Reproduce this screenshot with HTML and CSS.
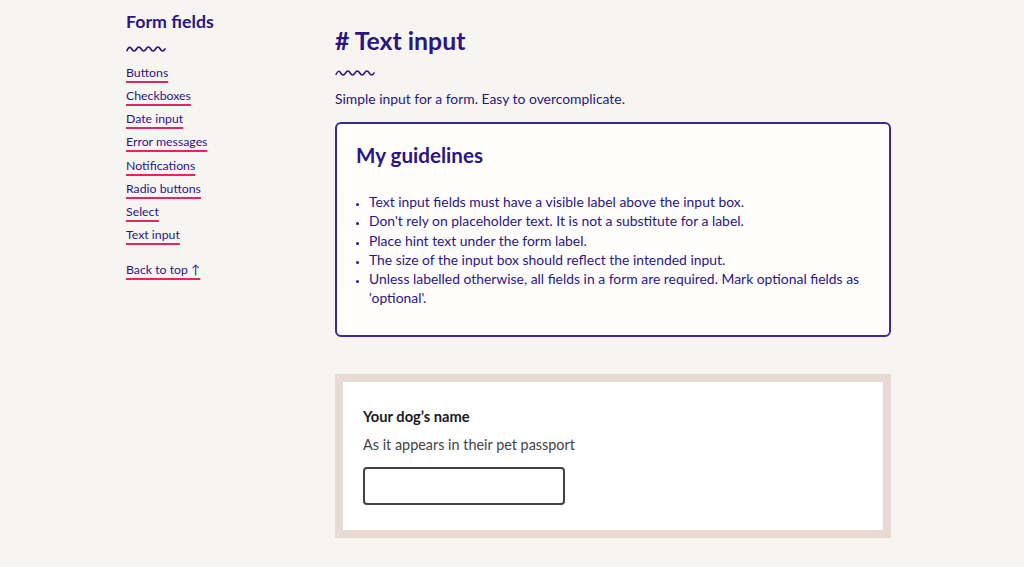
FILE: index.html
```html
<!DOCTYPE html>
<html lang="en">
<head>
<meta charset="utf-8">
<title>Text input</title>
<link rel="stylesheet" href="styles.css">
</head>
<body>
<div class="page">
  <nav class="sidebar">
    <h2 class="side-title">Form fields</h2>
    <svg class="squiggle" width="40" height="8" viewBox="0 0 40 8"><path d="M1 5.5 Q3.4 0 5.75 4 T10.5 4 T15.25 4 T20 4 T24.75 4 T29.5 4 T34.25 4 T39 4" fill="none" stroke="#2b1582" stroke-width="1.7" stroke-linecap="round"/></svg>
    <ul class="side-list">
      <li><a href="#">Buttons</a></li>
      <li><a href="#">Checkboxes</a></li>
      <li><a href="#">Date input</a></li>
      <li><a href="#">Error messages</a></li>
      <li><a href="#">Notifications</a></li>
      <li><a href="#">Radio buttons</a></li>
      <li><a href="#">Select</a></li>
      <li><a href="#">Text input</a></li>
    </ul>
    <a class="back" href="#">Back to top ↑</a>
  </nav>
  <main class="main">
    <h1 class="title"># Text input</h1>
    <svg class="squiggle" width="40" height="8" viewBox="0 0 40 8"><path d="M1 5.5 Q3.4 0 5.75 4 T10.5 4 T15.25 4 T20 4 T24.75 4 T29.5 4 T34.25 4 T39 4" fill="none" stroke="#2b1582" stroke-width="1.5" stroke-linecap="round"/></svg>
    <p class="intro">Simple input for a form. Easy to overcomplicate.</p>
    <section class="guidelines">
      <h2 class="g-title">My guidelines</h2>
      <ul class="g-list">
        <li>Text input fields must have a visible label above the input box.</li>
        <li>Don't rely on placeholder text. It is not a substitute for a label.</li>
        <li>Place hint text under the form label.</li>
        <li>The size of the input box should reflect the intended input.</li>
        <li>Unless labelled otherwise, all fields in a form are required. Mark optional fields as 'optional'.</li>
      </ul>
    </section>
    <section class="demo">
      <div class="demo-inner">
        <label class="label" for="dog">Your dog’s name</label>
        <p class="hint">As it appears in their pet passport</p>
        <input class="input" id="dog" type="text">
      </div>
    </section>
  </main>
</div>
</body>
</html>
```
FILE: styles.css
```css
html, body {
  margin: 0;
  padding: 0;
  background: #f7f5f1;
  font-family: "Lato", "Noto Sans", sans-serif;
  color: #2b1582;
}
.page {
  display: flex;
  padding-left: 126px;
}
.sidebar {
  width: 209px;
  padding-top: 11px;
}
.side-title {
  margin: 0;
  font-size: 17.8px;
  font-weight: 700;
  line-height: 20px;
}
.squiggle {
  display: block;
}
.sidebar .squiggle {
  margin-top: 14px;
}
.side-list {
  list-style: none;
  margin: 12px 0 0;
  padding: 0;
}
.side-list li {
  height: 23.15px;
  font-size: 12.3px;
  line-height: 16px;
}
a {
  color: #2b1582;
  text-decoration: underline;
  text-decoration-color: #e3265f;
  text-decoration-thickness: 1.6px;
  text-underline-offset: 3.5px;
}
.back {
  display: inline-block;
  margin-top: 12px;
  font-size: 12.3px;
  line-height: 16px;
}
.main {
  width: 556px;
  padding-top: 27px;
}
.title {
  margin: 0;
  font-size: 24.8px;
  font-weight: 700;
  line-height: 28px;
}
.main .squiggle {
  margin-top: 14px;
}
.intro {
  margin: 13px 0 0;
  font-size: 13.9px;
  line-height: 18px;
}
.guidelines {
  margin-top: 14px;
  background: #fffefc;
  border: 2px solid #3c2b8f;
  border-radius: 6px;
  padding: 19px 20px 27px 19px;
}
.g-title {
  margin: 0;
  font-size: 20.6px;
  font-weight: 700;
  line-height: 24px;
}
.g-list {
  margin: 25px 0 0;
  padding-left: 13px;
  font-size: 13.9px;
  line-height: 19.3px;
}
.g-list li::marker {
  font-size: 10px;
}
.demo {
  margin-top: 37px;
  border: 8px solid #e8d9d3;
  background: #ffffff;
}
.demo-inner {
  padding: 25px 20px 25px;
}
.label {
  display: block;
  font-size: 14.7px;
  font-weight: 700;
  color: #1a1a1a;
  line-height: 18px;
}
.hint {
  margin: 11px 0 0;
  font-size: 14.4px;
  color: #444444;
  line-height: 18px;
}
.input {
  display: block;
  margin-top: 13px;
  width: 202px;
  height: 38px;
  box-sizing: border-box;
  border: 2px solid #404040;
  border-radius: 4px;
  background: #fff;
  font-family: inherit;
}
```
